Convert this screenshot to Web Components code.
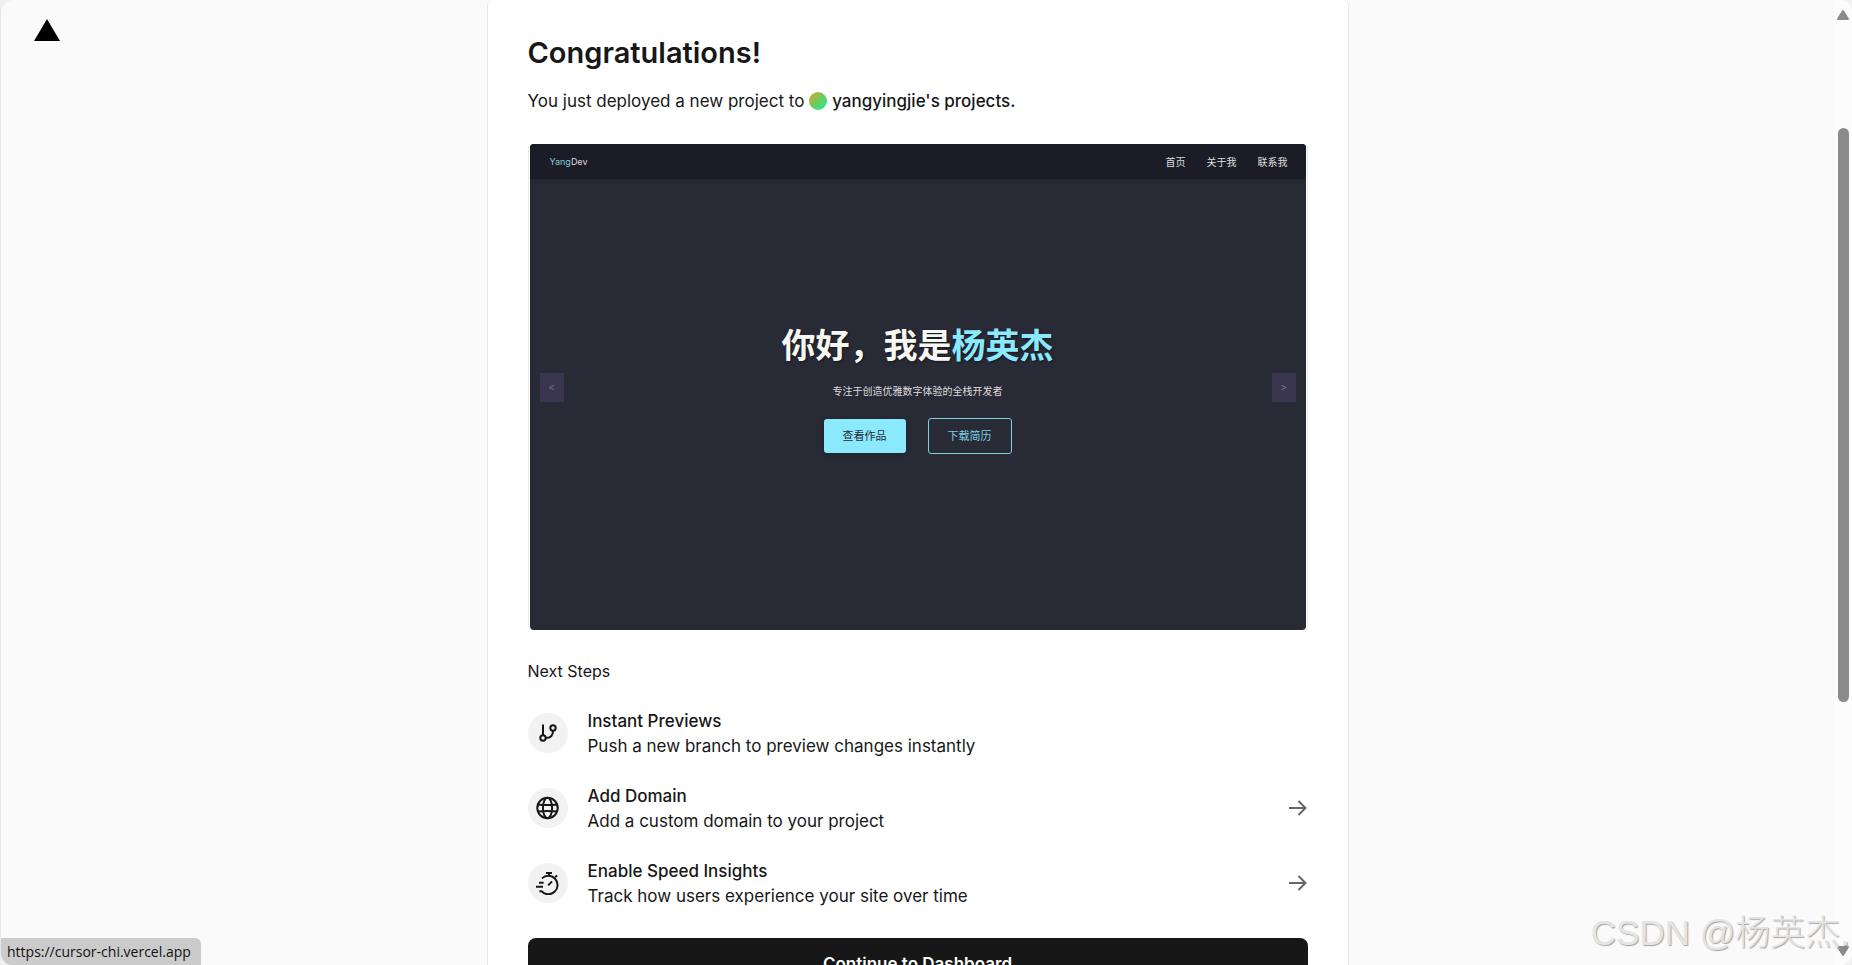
<!DOCTYPE html>
<html lang="en">
<head>
<meta charset="utf-8">
<title>Congratulations!</title>
<style>
  body {
    margin: 0;
    height: 100vh;
    overflow: hidden;
    background: #f1f1f1;
    color: #171717;
    font-family: Inter, "Liberation Sans", "Noto Sans CJK SC", sans-serif;
    font-size: 17px;
  }
</style>
</head>
<body>
<deploy-page>
  <deploy-card>
    <site-preview></site-preview>
    <next-step slot="steps" icon="branch" title="Instant Previews">Push a new branch to preview changes instantly</next-step>
    <next-step slot="steps" icon="globe" title="Add Domain" link="#domain">Add a custom domain to your project</next-step>
    <next-step slot="steps" icon="speed" title="Enable Speed Insights" link="#insights">Track how users experience your site over time</next-step>
  </deploy-card>
</deploy-page>

<script>
const icons = {
  branch: `
    <svg width="18" height="18" viewBox="0 0 18 18" fill="none" stroke="currentColor" stroke-width="2">
      <circle cx="4" cy="14" r="2.7"/>
      <circle cx="14" cy="4" r="2.7"/>
      <path d="M4 0.5V11.3M14 6.7C14 11 11.5 14 6.7 14"/>
    </svg>`,
  globe: `
    <svg width="24" height="24" viewBox="0 0 24 24" fill="none" stroke="currentColor" stroke-width="2">
      <circle cx="11.5" cy="12" r="10.2"/>
      <ellipse cx="11.5" cy="12" rx="4.6" ry="10.2"/>
      <path d="M1.8 8.5Q11.5 9.6 21.2 8.5M1.8 15.5Q11.5 14.4 21.2 15.5"/>
    </svg>`,
  speed: `
    <svg width="24" height="24" viewBox="0 0 24 24" fill="none" stroke="currentColor" stroke-width="2">
      <path d="M6 7.4A9.2 9.2 0 1 1 5.5 20.2H3.4"/>
      <path d="M10 2H16M13 2V5M19 6L21.2 4.6M12.2 14.4L16 10.4"/>
      <path d="M3 11.8H7.6M0 15.8H7"/>
    </svg>`
}

class DeployPage extends HTMLElement {
  constructor() {
    super()
    this.attachShadow({ mode: "open" })

    this.shadowRoot.innerHTML = `
      <div class="frame">
        <a class="logo" href="#home" aria-label="Home">
          <svg width="26" height="22" viewBox="0 0 26 22"><path d="M13 0L26 22H0Z"/></svg>
        </a>
        <main><slot></slot></main>
      </div>
      <scroll-rail></scroll-rail>
      <div class="status">https://cursor-chi.vercel.app</div>
      <div class="mark">CSDN @杨英杰.</div>

      <style>
        :host {
          display: flex;
          position: relative;
          height: 100vh;
          box-sizing: border-box;
          overflow: hidden;
          background: #fafafa;
          border-left: 1px solid #e6e6e6;
          border-radius: 12px;
        }
        .frame {
          flex: 1;
          min-width: 0;
        }
        main {
          display: flex;
          justify-content: center;
        }
        .logo {
          position: absolute;
          left: 33px;
          top: 19px;
          color: black;
        }
        svg {
          display: block;
        }
        .status {
          position: absolute;
          left: -1px;
          bottom: 0;
          padding: 0 10px 0 7px;
          line-height: 27px;
          background: #cbcbcb;
          color: #111;
          border-top-right-radius: 6px;
          font-family: "Open Sans", sans-serif;
          font-size: 14px;
        }
        .mark {
          position: absolute;
          right: 2px;
          bottom: 8px;
          color: #e4e4e4;
          font-family: "Liberation Sans", "Noto Sans CJK SC", sans-serif;
          font-size: 35px;
          font-weight: 300;
          line-height: 48px;
          text-shadow: 1px 1px 1px #a4a4a4;
          pointer-events: none;
        }
      </style>
    `
  }
}

class ScrollRail extends HTMLElement {
  constructor() {
    super()
    this.attachShadow({ mode: "open" })

    this.shadowRoot.innerHTML = `
      <svg viewBox="0 0 12 10"><path d="M6 1L11 9H1Z"/></svg>
      <div class="track"><div class="thumb"></div></div>
      <svg viewBox="0 0 12 10"><path d="M1 1H11L6 9Z"/></svg>

      <style>
        :host {
          display: flex;
          flex-direction: column;
          align-items: center;
          gap: 10px;
          width: 18px;
          padding: 10px 0 9px;
          box-sizing: border-box;
          background: #fcfcfc;
        }
        svg {
          width: 12px;
          height: 10px;
          fill: #8b8b8b;
          stroke: #8b8b8b;
          stroke-width: 2;
          stroke-linejoin: round;
        }
        .track {
          flex: 1;
          display: grid;
          grid-template-rows: 98fr 574fr 234fr;
        }
        .thumb {
          grid-row: 2;
          width: 11px;
          border-radius: 6px;
          background: #8b8b8b;
        }
      </style>
    `
  }
}

class DeployCard extends HTMLElement {
  constructor() {
    super()
    this.attachShadow({ mode: "open" })

    this.shadowRoot.innerHTML = `
      <h1>Congratulations!</h1>
      <p>You just deployed a new project to <span class="avatar"></span><b>yangyingjie's projects.</b></p>
      <slot></slot>
      <h2>Next Steps</h2>
      <div class="steps"><slot name="steps"></slot></div>
      <button type="button">Continue to Dashboard</button>

      <style>
        :host {
          display: block;
          width: 100%;
          max-width: 862px;
          box-sizing: border-box;
          padding: 33px 40px 40px;
          background: white;
          border: 1px solid #e6e6e6;
          border-top: none;
          border-radius: 6px;
        }
        h1 {
          margin: 0 0 16px;
          font-size: 29px;
          font-weight: 600;
          line-height: 40px;
        }
        p {
          display: flex;
          align-items: center;
          margin: 0 0 30px;
          line-height: 24px;
          white-space: pre;
        }
        b {
          font-weight: 500;
        }
        .avatar {
          width: 18px;
          height: 18px;
          margin-right: 5px;
          border-radius: 50%;
          background: linear-gradient(135deg, #e0a526, #6ccb60 50%, #1cf09c);
        }
        h2 {
          margin: 28px 0 24px;
          font-size: 16px;
          font-weight: 400;
          line-height: 24px;
        }
        .steps {
          display: flex;
          flex-direction: column;
          gap: 23px;
        }
        button {
          display: block;
          width: 100%;
          height: 50px;
          margin-top: 29px;
          padding: 2px 0 0;
          border: none;
          border-radius: 8px;
          background: #171717;
          color: white;
          font: 600 17px Inter, sans-serif;
        }
      </style>
    `
  }
}

class NextStep extends HTMLElement {
  constructor() {
    super()
    this.attachShadow({ mode: "open" })

    const title = this.getAttribute("title")
    const link = this.getAttribute("link")
    const tag = link ? "a" : "div"

    this.shadowRoot.innerHTML = `
      <${tag} class="row" ${link ? `href="${link}"` : ""}>
        <span class="icon">${icons[this.getAttribute("icon")]}</span>
        <span class="text"><strong>${title}</strong><slot></slot></span>
        ${link ? `
          <svg class="arrow" width="20" height="18" viewBox="0 0 20 18" fill="none" stroke="#666" stroke-width="2">
            <path d="M1 9H18M10.5 2L17.5 9L10.5 16"/>
          </svg>
        ` : ""}
      </${tag}>

      <style>
        :host {
          display: block;
        }
        .row {
          display: flex;
          align-items: center;
          gap: 20px;
          line-height: 25px;
          color: inherit;
          text-decoration: none;
        }
        .icon {
          display: flex;
          align-items: center;
          justify-content: center;
          width: 40px;
          height: 40px;
          border-radius: 50%;
          background: #f2f2f2;
        }
        .text {
          flex: 1;
          padding-top: 2px;
        }
        strong {
          display: block;
          font-weight: 500;
        }
      </style>
    `
  }
}

class SitePreview extends HTMLElement {
  constructor() {
    super()
    this.attachShadow({ mode: "open" })

    this.shadowRoot.innerHTML = `
      <div class="site" lang="zh-CN">
        <header>
          <span><i>Yang</i>Dev</span>
          <nav>
            <a href="#home">首页</a>
            <a href="#about">关于我</a>
            <a href="#contact">联系我</a>
          </nav>
        </header>
        <section>
          <button class="turn" type="button">&lt;</button>
          <div class="hero">
            <h3>你好，我是<i>杨英杰</i></h3>
            <p>专注于创造优雅数字体验的全栈开发者</p>
            <div class="actions">
              <a class="solid" href="#work">查看作品</a>
              <a class="outline" href="#resume">下载简历</a>
            </div>
          </div>
          <button class="turn" type="button">&gt;</button>
        </section>
      </div>

      <style>
        :host {
          display: block;
          padding: 1px;
          border: 1px solid #ebebeb;
          border-top: none;
          border-bottom: none;
          border-radius: 5px;
        }
        .site {
          display: flex;
          flex-direction: column;
          aspect-ratio: 776 / 486;
          overflow: hidden;
          border-radius: 4px;
          background: #282a36;
          color: #dededc;
          font-family: Inter, "Noto Sans CJK SC", sans-serif;
          font-size: 10px;
        }
        header {
          display: flex;
          align-items: center;
          justify-content: space-between;
          height: 35px;
          padding: 0 18px 0 20px;
          background: #1c1c26;
          box-shadow: 0 1px 4px #1c1c2680;
          font-size: 9px;
        }
        i {
          color: #8be9fd;
          font-style: normal;
        }
        header i {
          color: #7cc9dc;
        }
        nav {
          display: flex;
          gap: 21px;
          font-size: 10px;
        }
        a {
          color: inherit;
          text-decoration: none;
        }
        section {
          flex: 1;
          display: flex;
          align-items: center;
          justify-content: space-between;
          padding: 0 10px 35px;
        }
        .turn {
          width: 24px;
          height: 29px;
          padding: 0;
          border: none;
          background: #3b3650;
          color: #77718d;
          font: 10px Inter, sans-serif;
        }
        .hero {
          padding-top: 3px;
          text-align: center;
        }
        h3 {
          margin: 0 0 15px;
          color: #f8f8f2;
          font-size: 34px;
          line-height: 44px;
          text-shadow: 1px 1px 2px #15161d;
        }
        p {
          margin: 0 0 19px;
          line-height: 16px;
        }
        .actions {
          display: flex;
          align-items: center;
          justify-content: center;
          gap: 22px;
          font-size: 11px;
          line-height: 34px;
        }
        .solid {
          padding: 0 19px;
          border-radius: 3px;
          background: #8be9fd;
          color: #282a36;
          box-shadow: 0 1px 4px #15161d80;
        }
        .outline {
          padding: 0 19px;
          border: 1px solid #7cd0e2;
          border-radius: 3px;
          color: #7cd0e2;
        }
      </style>
    `
  }
}

customElements.define("deploy-page", DeployPage)
customElements.define("scroll-rail", ScrollRail)
customElements.define("deploy-card", DeployCard)
customElements.define("next-step", NextStep)
customElements.define("site-preview", SitePreview)
</script>
</body>
</html>
